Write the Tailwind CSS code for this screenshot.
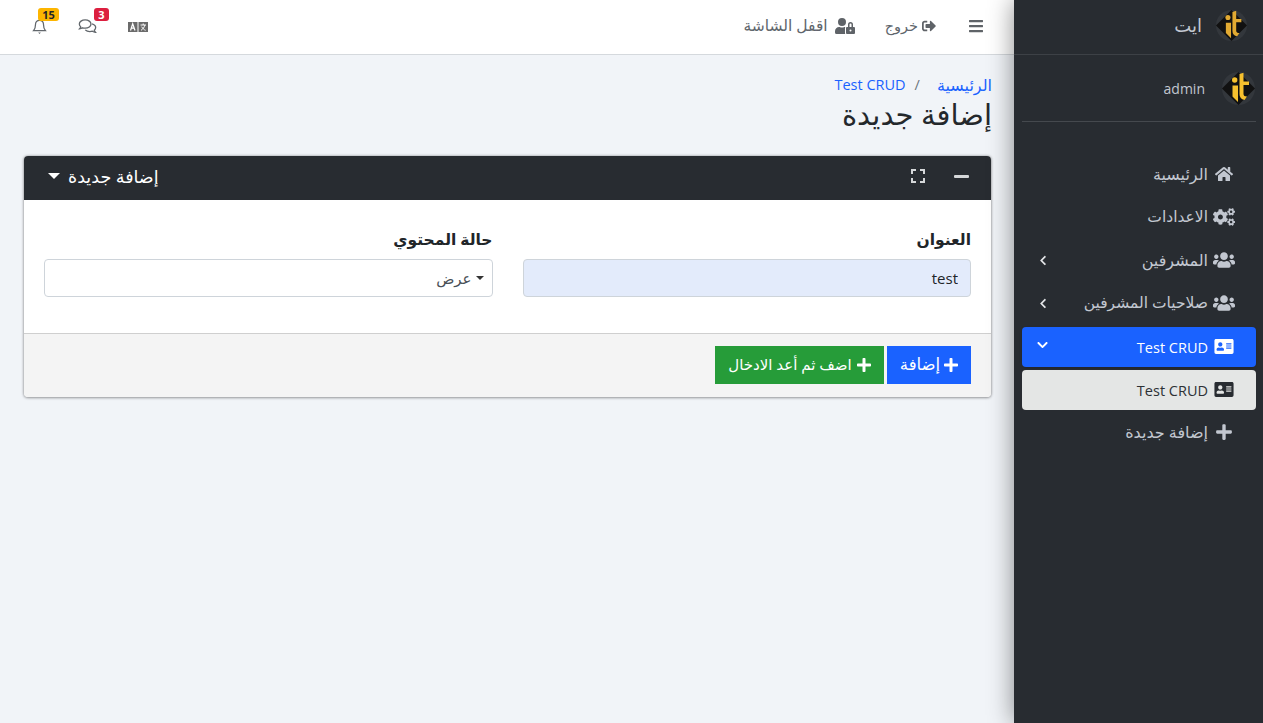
<!DOCTYPE html>
<html lang="ar" dir="rtl">
<head>
    <meta charset="UTF-8">
    <title>إضافة جديدة</title>
    <script src="https://cdn.jsdelivr.net/npm/@tailwindcss/browser@4"></script>
</head>
<body class="bg-[#f1f4f8] h-[723px] overflow-hidden font-['Open_Sans','Noto_Sans','DejaVu_Sans',sans-serif] text-[14px]">
<div class="flex h-[723px]">
    <!-- Sidebar -->
    <aside class="w-[249px] shrink-0 bg-[#282c31] relative z-10 shadow-[0_0_24px_rgba(0,0,0,0.45)] text-[#c2c7d0]">
        <div class="h-[55px] border-b border-[#3d4146] flex items-center pr-[16px] pb-[4px] gap-[14px]">
            <svg class="w-[31px] h-[31px]" viewBox="0 0 33 33"><circle cx="16.5" cy="16.5" r="16.5" fill="#33373c"/><path d="M16.5 0 33 16.5 16.5 33 0 16.5z" fill="#111"/><circle cx="12.7" cy="8" r="2.7" fill="#e2aa32"/><path d="M10.5 13.5H16V30L10.5 24.5zM17.5 2 21.500 .8V9.500H27V13H21.500V22Q21.500 24.500 25 24.500L22.500 28Q17.500 27 17.500 22z" fill="#e2aa32"/></svg>
            <span class="text-[18px] text-[#c2c7d0]">ايت</span>
        </div>
        <div class="mr-[7px] ml-[8px] h-[67px] border-b border-[#45494e] flex items-center pr-[1px] gap-[17px]">
            <svg class="w-[33px] h-[33px]" viewBox="0 0 33 33"><circle cx="16.5" cy="16.5" r="16.5" fill="#33373c"/><path d="M16.5 0 33 16.5 16.5 33 0 16.5z" fill="#111"/><circle cx="12.7" cy="8" r="2.7" fill="#f6c02e"/><path d="M10.5 13.5H16V30L10.5 24.5zM17.5 2 21.500 .8V9.500H27V13H21.500V22Q21.500 24.500 25 24.500L22.500 28Q17.500 27 17.500 22z" fill="#f6c02e"/></svg>
            <span class="text-[14px] text-[#c2c7d0]">admin</span>
        </div>
        <nav class="mt-[33px] mr-[7px] ml-[8px] flex flex-col gap-[3px]">
            <a class="h-[40px] flex items-center pr-[21px] gap-[5px] rounded">
                <svg class="w-[22px] h-[16px] -mt-[2px] fill-[#c2c7d0]" viewBox="0 0 576 512"><path d="M280.37 148.26L96 300.11V464a16 16 0 0 0 16 16l112.06-.29a16 16 0 0 0 15.92-16V368a16 16 0 0 1 16-16h64a16 16 0 0 1 16 16v95.64a16 16 0 0 0 16 16.05L464 480a16 16 0 0 0 16-16V300L295.67 148.26a12.19 12.19 0 0 0-15.3 0zM571.6 251.47L488 182.56V44.05a12 12 0 0 0-12-12h-56a12 12 0 0 0-12 12v72.61L318.47 43a48 48 0 0 0-61 0L4.34 251.47a12 12 0 0 0-1.6 16.9l25.5 31A12 12 0 0 0 45.15 301l235.22-193.74a12.19 12.19 0 0 1 15.3 0L530.9 301a12 12 0 0 0 16.9-1.6l25.5-31a12 12 0 0 0-1.7-16.93z"/></svg>
                <span class="text-[16px] -translate-y-px">الرئيسية</span>
            </a>
            <a class="h-[40px] flex items-center pr-[21px] gap-[5px] rounded">
                <svg class="w-[22px] h-[18px] -mt-[2px] fill-[#c2c7d0]" viewBox="0 0 640 512"><path d="M512.1 191l-8.2 14.3c-3 5.3-9.4 7.5-15.1 5.4-11.8-4.4-22.6-10.7-32.1-18.6-4.6-3.8-5.8-10.5-2.8-15.7l8.2-14.3c-6.9-8-12.3-17.3-15.9-27.4h-16.5c-6 0-11.2-4.3-12.2-10.3-2-12-2.1-24.6 0-37.1 1-6 6.2-10.4 12.2-10.4h16.5c3.6-10.1 9-19.4 15.9-27.4l-8.2-14.3c-3-5.2-1.9-11.9 2.8-15.7 9.5-7.9 20.4-14.2 32.1-18.6 5.7-2.1 12.1.1 15.1 5.4l8.2 14.3c10.5-1.9 21.2-1.9 31.7 0L552 6.3c3-5.3 9.4-7.5 15.1-5.4 11.8 4.4 22.6 10.7 32.1 18.6 4.6 3.8 5.8 10.5 2.8 15.7l-8.2 14.3c6.9 8 12.3 17.3 15.9 27.4h16.5c6 0 11.2 4.3 12.2 10.3 2 12 2.1 24.6 0 37.1-1 6-6.2 10.4-12.2 10.4h-16.5c-3.6 10.1-9 19.4-15.9 27.4l8.2 14.3c3 5.2 1.9 11.9-2.8 15.7-9.5 7.9-20.4 14.2-32.1 18.6-5.7 2.1-12.1-.1-15.1-5.4l-8.2-14.3c-10.4 1.9-21.2 1.9-31.7 0zm-10.5-58.8c38.5 29.6 82.4-14.3 52.8-52.8-38.5-29.7-82.4 14.3-52.8 52.8zM386.3 286.1l33.7 16.8c10.1 5.8 14.5 18.1 10.5 29.1-8.9 24.2-26.4 46.4-42.6 65.8-7.4 8.9-20.2 11.1-30.3 5.3l-29.1-16.8c-16 13.7-34.6 24.6-54.9 31.7v33.6c0 11.6-8.3 21.6-19.7 23.6-24.6 4.2-50.4 4.4-75.9 0-11.5-2-20-11.9-20-23.6V418c-20.3-7.2-38.9-18-54.9-31.7L74 403c-10 5.8-22.9 3.6-30.3-5.3-16.2-19.4-33.3-41.6-42.2-65.7-4-10.9.4-23.2 10.5-29.1l33.3-16.8c-3.9-20.9-3.9-42.4 0-63.4L12 205.8c-10.1-5.8-14.6-18.1-10.5-29 8.9-24.2 26-46.4 42.2-65.8 7.4-8.9 20.2-11.1 30.3-5.3l29.1 16.8c16-13.7 34.6-24.6 54.9-31.7V57.1c0-11.5 8.2-21.5 19.6-23.5 24.6-4.2 50.5-4.4 76-.1 11.5 2 20 11.9 20 23.6v33.6c20.3 7.2 38.9 18 54.9 31.7l29.1-16.8c10-5.8 22.9-3.6 30.3 5.3 16.2 19.4 33.2 41.6 42.1 65.8 4 10.9.1 23.2-10 29.1l-33.7 16.8c3.9 21 3.9 42.5 0 63.5zm-117.6 21.1c59.2-77-28.7-164.9-105.7-105.7-59.2 77 28.7 164.9 105.7 105.7zm243.4 182.7l-8.2 14.3c-3 5.3-9.4 7.5-15.1 5.4-11.8-4.4-22.6-10.7-32.1-18.6-4.6-3.8-5.8-10.5-2.8-15.7l8.2-14.3c-6.9-8-12.3-17.3-15.9-27.4h-16.5c-6 0-11.2-4.3-12.2-10.3-2-12-2.1-24.6 0-37.1 1-6 6.2-10.4 12.2-10.4h16.5c3.6-10.1 9-19.4 15.9-27.4l-8.2-14.3c-3-5.2-1.9-11.9 2.8-15.7 9.5-7.9 20.4-14.2 32.1-18.6 5.7-2.1 12.1.1 15.1 5.4l8.2 14.3c10.5-1.9 21.2-1.9 31.7 0l8.2-14.3c3-5.3 9.4-7.5 15.1-5.4 11.8 4.4 22.6 10.7 32.1 18.6 4.6 3.8 5.8 10.5 2.8 15.7l-8.2 14.3c6.9 8 12.3 17.3 15.9 27.4h16.5c6 0 11.2 4.3 12.2 10.3 2 12 2.1 24.6 0 37.1-1 6-6.2 10.4-12.2 10.4h-16.5c-3.6 10.1-9 19.4-15.9 27.4l8.2 14.3c3 5.2 1.9 11.9-2.8 15.7-9.5 7.9-20.4 14.2-32.1 18.6-5.7 2.1-12.1-.1-15.1-5.4l-8.2-14.3c-10.4 1.9-21.2 1.9-31.7 0zM501.6 431c38.5 29.6 82.4-14.3 52.8-52.8-38.5-29.6-82.4 14.3-52.8 52.8z"/></svg>
                <span class="text-[15.5px] -translate-y-px">الاعدادات</span>
            </a>
            <a class="h-[40px] flex items-center pr-[21px] pl-[17px] gap-[5px] rounded">
                <svg class="w-[22px] h-[18px] -mt-[2px] fill-[#c2c7d0]" viewBox="0 0 640 512"><path d="M96 224c35.3 0 64-28.7 64-64s-28.7-64-64-64-64 28.7-64 64 28.7 64 64 64zm448 0c35.3 0 64-28.7 64-64s-28.7-64-64-64-64 28.7-64 64 28.7 64 64 64zm32 32h-64c-17.6 0-33.5 7.1-45.1 18.6 40.3 22.1 68.9 62 75.1 109.4h66c17.7 0 32-14.3 32-32v-32c0-35.3-28.7-64-64-64zm-256 0c61.9 0 112-50.1 112-112S381.9 32 320 32 208 82.1 208 144s50.1 112 112 112zm76.8 32h-8.3c-20.8 10-43.9 16-68.5 16s-47.6-6-68.5-16h-8.3C179.6 288 128 339.6 128 403.2V432c0 26.5 21.5 48 48 48h288c26.5 0 48-21.5 48-48v-28.8c0-63.6-51.6-115.2-115.2-115.2zm-223.7-13.4C161.5 263.1 145.6 256 128 256H64c-35.3 0-64 28.7-64 64v32c0 17.7 14.3 32 32 32h65.9c6.3-47.4 34.9-87.3 75.2-109.4z"/></svg>
                <span class="text-[16px] -translate-y-px">المشرفين</span>
                <svg class="w-[8px] h-[11px] mr-auto -mt-[2px] fill-[#e4e6e8]" viewBox="0 0 320 512"><path d="M34.52 239.03L228.87 44.69c9.37-9.37 24.57-9.37 33.94 0l22.67 22.67c9.36 9.36 9.37 24.52.04 33.9L131.49 256l154.02 154.75c9.34 9.38 9.32 24.54-.04 33.9l-22.67 22.67c-9.37 9.37-24.57 9.37-33.94 0L34.52 272.97c-9.37-9.37-9.37-24.57 0-33.94z"/></svg>
            </a>
            <a class="h-[40px] flex items-center pr-[21px] pl-[17px] gap-[5px] rounded">
                <svg class="w-[22px] h-[18px] -mt-[2px] fill-[#c2c7d0]" viewBox="0 0 640 512"><path d="M96 224c35.3 0 64-28.7 64-64s-28.7-64-64-64-64 28.7-64 64 28.7 64 64 64zm448 0c35.3 0 64-28.7 64-64s-28.7-64-64-64-64 28.7-64 64 28.7 64 64 64zm32 32h-64c-17.6 0-33.5 7.1-45.1 18.6 40.3 22.1 68.9 62 75.1 109.4h66c17.7 0 32-14.3 32-32v-32c0-35.3-28.7-64-64-64zm-256 0c61.9 0 112-50.1 112-112S381.9 32 320 32 208 82.1 208 144s50.1 112 112 112zm76.8 32h-8.3c-20.8 10-43.9 16-68.5 16s-47.6-6-68.5-16h-8.3C179.6 288 128 339.6 128 403.2V432c0 26.5 21.5 48 48 48h288c26.5 0 48-21.5 48-48v-28.8c0-63.6-51.6-115.2-115.2-115.2zm-223.7-13.4C161.5 263.1 145.6 256 128 256H64c-35.3 0-64 28.7-64 64v32c0 17.7 14.3 32 32 32h65.9c6.3-47.4 34.9-87.3 75.2-109.4z"/></svg>
                <span class="text-[15.5px] -translate-y-px">صلاحيات المشرفين</span>
                <svg class="w-[8px] h-[11px] mr-auto -mt-[2px] fill-[#e4e6e8]" viewBox="0 0 320 512"><path d="M34.52 239.03L228.87 44.69c9.37-9.37 24.57-9.37 33.94 0l22.67 22.67c9.36 9.36 9.37 24.52.04 33.9L131.49 256l154.02 154.75c9.34 9.38 9.32 24.54-.04 33.9l-22.67 22.67c-9.37 9.37-24.57 9.37-33.94 0L34.52 272.97c-9.37-9.37-9.37-24.57 0-33.94z"/></svg>
            </a>
            <a class="h-[40px] flex items-center pr-[21px] pl-[15px] gap-[5px] rounded bg-[#1a62ff] text-white shadow">
                <svg class="w-[22px] h-[17px] -mt-[2px] fill-white" viewBox="0 0 576 512"><path d="M528 32H48C21.5 32 0 53.5 0 80v352c0 26.5 21.5 48 48 48h480c26.5 0 48-21.5 48-48V80c0-26.5-21.5-48-48-48zm-352 96c35.3 0 64 28.7 64 64s-28.7 64-64 64-64-28.7-64-64 28.7-64 64-64zm112 236.8c0 10.6-10 19.2-22.4 19.2H86.4C74 384 64 375.4 64 364.8v-19.2c0-31.8 30.1-57.6 67.2-57.6h5c12.3 5.1 25.7 8 39.8 8s27.6-2.9 39.8-8h5c37.1 0 67.2 25.8 67.2 57.6v19.2zM512 312c0 4.4-3.6 8-8 8H360c-4.4 0-8-3.6-8-8v-16c0-4.4 3.6-8 8-8h144c4.4 0 8 3.6 8 8v16zm0-64c0 4.4-3.6 8-8 8H360c-4.4 0-8-3.6-8-8v-16c0-4.4 3.6-8 8-8h144c4.4 0 8 3.6 8 8v16zm0-64c0 4.4-3.6 8-8 8H360c-4.4 0-8-3.6-8-8v-16c0-4.4 3.6-8 8-8h144c4.4 0 8 3.6 8 8v16z"/></svg>
                <span class="text-[14.5px] translate-y-px">Test CRUD</span>
                <svg class="w-[11px] h-[12px] mr-auto -mt-[4px] fill-white" viewBox="0 0 448 512"><path d="M207.029 381.476L12.686 187.132c-9.373-9.373-9.373-24.569 0-33.941l22.667-22.667c9.357-9.357 24.522-9.375 33.901-.04L224 284.505l154.745-154.021c9.379-9.335 24.544-9.317 33.901.04l22.667 22.667c9.373 9.373 9.373 24.569 0 33.941L240.971 381.476c-9.373 9.372-24.569 9.372-33.942 0z"/></svg>
            </a>
            <a class="h-[40px] flex items-center pr-[21px] gap-[5px] rounded bg-[#e4e6e5] text-[#2d3135]">
                <svg class="w-[22px] h-[17px] -mt-[2px] fill-[#282c31]" viewBox="0 0 576 512"><path d="M528 32H48C21.5 32 0 53.5 0 80v352c0 26.5 21.5 48 48 48h480c26.5 0 48-21.5 48-48V80c0-26.5-21.5-48-48-48zm-352 96c35.3 0 64 28.7 64 64s-28.7 64-64 64-64-28.7-64-64 28.7-64 64-64zm112 236.8c0 10.6-10 19.2-22.4 19.2H86.4C74 384 64 375.4 64 364.8v-19.2c0-31.8 30.1-57.6 67.2-57.6h5c12.3 5.1 25.7 8 39.8 8s27.6-2.9 39.8-8h5c37.1 0 67.2 25.8 67.2 57.6v19.2zM512 312c0 4.4-3.6 8-8 8H360c-4.4 0-8-3.6-8-8v-16c0-4.4 3.6-8 8-8h144c4.4 0 8 3.6 8 8v16zm0-64c0 4.4-3.6 8-8 8H360c-4.4 0-8-3.6-8-8v-16c0-4.4 3.6-8 8-8h144c4.4 0 8 3.6 8 8v16zm0-64c0 4.4-3.6 8-8 8H360c-4.4 0-8-3.6-8-8v-16c0-4.4 3.6-8 8-8h144c4.4 0 8 3.6 8 8v16z"/></svg>
                <span class="text-[14.5px] translate-y-px">Test CRUD</span>
            </a>
            <a class="h-[40px] flex items-center pr-[24px] gap-[8px] rounded">
                <svg class="w-[16px] h-[18px] -mt-[2px] fill-[#c2c7d0]" viewBox="0 0 448 512"><path d="M416 208H272V64c0-17.67-14.33-32-32-32h-32c-17.67 0-32 14.33-32 32v144H32c-17.67 0-32 14.33-32 32v32c0 17.67 14.33 32 32 32h144v144c0 17.67 14.33 32 32 32h32c17.67 0 32-14.33 32-32V304h144c17.67 0 32-14.33 32-32v-32c0-17.67-14.33-32-32-32z"/></svg>
                <span class="text-[16px] -translate-y-px">إضافة جديدة</span>
            </a>
        </nav>
    </aside>

    <main class="flex-1 min-w-0">
        <!-- Navbar -->
        <header class="h-[55px] bg-white border-b border-[#d5d9dd] flex items-center text-[#60666c] text-[15px]">
            <svg class="w-[14px] h-[16px] mr-[31px] -mt-[2px] fill-[#5f6368]" viewBox="0 0 448 512"><path d="M16 132h416c8.837 0 16-7.163 16-16V76c0-8.837-7.163-16-16-16H16C7.163 60 0 67.163 0 76v40c0 8.837 7.163 16 16 16zm0 160h416c8.837 0 16-7.163 16-16v-40c0-8.837-7.163-16-16-16H16c-8.837 0-16 7.163-16 16v40c0 8.837 7.163 16 16 16zm0 160h416c8.837 0 16-7.163 16-16v-40c0-8.837-7.163-16-16-16H16c-8.837 0-16 7.163-16 16v40c0 8.837 7.163 16 16 16z"/></svg>
            <a class="flex items-center gap-[3px] mr-[32px]">
                <svg class="w-[16px] h-[14px] -mt-[2px] fill-[#5f6368]" viewBox="0 0 512 512"><path d="M497 273L329 441c-15 15-41 4.5-41-17v-96H152c-13.3 0-24-10.7-24-24v-96c0-13.3 10.7-24 24-24h136V88c0-21.4 25.9-32 41-17l168 168c9.3 9.4 9.3 24.6 0 34zM192 436v-40c0-6.6-5.4-12-12-12H96c-17.7 0-32-14.3-32-32V160c0-17.7 14.3-32 32-32h84c6.6 0 12-5.4 12-12V76c0-6.6-5.4-12-12-12H96c-53 0-96 43-96 96v192c0 53 43 96 96 96h84c6.6 0 12-5.4 12-12z"/></svg>
                <span class="text-[14.5px] -translate-y-px">خروج</span>
            </a>
            <a class="flex items-center gap-[7px] mr-[30px]">
                <svg class="w-[20px] h-[16px] -mt-[2px] fill-[#5f6368]" viewBox="0 0 640 512"><path d="M224 256A128 128 0 1 0 96 128a128 128 0 0 0 128 128zm96 64a63.08 63.08 0 0 1 8.1-30.5c-4.8-.5-9.5-1.5-14.5-1.5h-16.7a174.08 174.08 0 0 1-145.8 0h-16.7A134.43 134.43 0 0 0 0 422.4V464a48 48 0 0 0 48 48h280.9a63.54 63.54 0 0 1-8.9-32zm288-32h-32v-80a80 80 0 0 0-160 0v80h-32a32 32 0 0 0-32 32v160a32 32 0 0 0 32 32h224a32 32 0 0 0 32-32V320a32 32 0 0 0-32-32zM496 432a32 32 0 1 1 32-32 32 32 0 0 1-32 32zm32-144h-64v-80a32 32 0 0 1 64 0z"/></svg>
                <span class="text-[15.5px] -translate-y-px">اقفل الشاشة</span>
            </a>
            <div class="mr-auto flex items-center pl-[32px] gap-[31px] -mt-[1px]">
                <svg class="w-[20px] h-[10px]" viewBox="0 0 20 10"><rect width="9.5" height="10" fill="#6b6b6b"/><rect x="10.5" width="9.5" height="10" fill="#6b6b6b"/><path d="M2.5 8.5 4.7 1.8 7 8.5M3.4 6.1H6" fill="none" stroke="#fff" stroke-width="1.2"/><path d="M12.5 3H18M15.2 1.5V3M13 8.3C15 7.1 16.3 5.500 16.800 3.100M13.700 4.700C14.600 6.500 15.900 7.700 17.600 8.300" fill="none" stroke="#fff" stroke-width="1"/></svg>
                <div class="relative w-[19px] h-[15px]">
                    <svg class="w-[19px] h-[15px]" viewBox="0 0 19 16" fill="none" stroke="#62676c" stroke-width="1.4"><path d="M7 1C3.500 1 .8 3 .8 5.400c0 1.200.6 2.200 1.500 3-.2.8-.7 1.500-1.200 2 1.200 0 2.300-.4 3.200-1 .8.300 1.700.4 2.700.4 3.500 0 6.200-2 6.200-4.400S10.500 1 7 1z"/><path d="M14.300 5.200c2.200.6 3.900 2.100 3.900 3.900 0 1.100-.6 2.100-1.500 2.900.2.900.7 1.600 1.200 2.100-1.200 0-2.300-.5-3.200-1.100-.8.300-1.700.4-2.700.4-2 0-3.800-.7-4.900-1.800"/></svg>
                    <span class="absolute -top-[11px] -right-[12px] h-[13px] min-w-[15px] px-[3px] rounded-[3px] bg-[#dc1f3f] text-white text-[11px] font-bold leading-[13px] text-center">3</span>
                </div>
                <div class="relative w-[15px] h-[16px]">
                    <svg class="w-[15px] h-[16px]" viewBox="0 0 15 18" fill="none" stroke="#62676c" stroke-width="1.4"><path d="M7.500 1.500C4.800 1.500 3 3.500 3 6.200c0 4-.8 5.400-2.200 7h13.400c-1.400-1.600-2.200-3-2.200-7 0-2.700-1.800-4.700-4.500-4.700z"/><path d="M6 15.300h3l-1.500 1.500z" fill="#62676c" stroke="none"/></svg>
                    <span class="absolute -top-[11px] -right-[12px] h-[13px] min-w-[21px] px-[3px] rounded-[3px] bg-[#fdb500] text-[#1f2327] text-[11px] font-bold leading-[13px] text-center">15</span>
                </div>
            </div>
        </header>

        <!-- Page head -->
        <div class="pr-[22px] pl-[23px]">
            <div class="pt-[20px] flex items-center h-[40px] text-[#1a62ff] text-[14.5px]">
                <a class="text-[16px]">الرئيسية</a>
                <span class="text-[#6c757d] mr-[17px] ml-[9px]">/</span>
                <a>Test CRUD</a>
            </div>
            <h1 class="text-[29px] leading-[36px] text-[#24282c] mt-[1px]">إضافة جديدة</h1>

            <!-- Card -->
            <section class="mt-[24px] mx-px rounded-[4px] bg-white shadow-[0_0_3px_rgba(0,0,0,0.35),0_1px_3px_rgba(0,0,0,0.25)] overflow-hidden">
                <div class="h-[44px] pb-[4px] bg-[#282c31] text-white flex items-center pr-[22px] pl-[24px]">
                    <svg class="w-[15px] h-[3px] fill-[#d5d7d9]" viewBox="0 0 15 3"><rect width="15" height="3" rx="1"/></svg>
                    <svg class="w-[14px] h-[14px] mr-[29px]" viewBox="0 0 14 14" fill="none" stroke="#d5d7d9" stroke-width="2"><path d="M1 5V1H5M9 1H13V5M13 9V13H9M5 13H1V9"/></svg>
                    <span class="mr-auto flex items-center gap-[8px] text-[17.5px]">
                        <span>إضافة جديدة</span>
                        <svg class="w-[12px] h-[6px] fill-white" viewBox="0 0 12 6"><path d="M0 0H12L6 6z"/></svg>
                    </span>
                </div>
                <div class="h-[133px] px-[20px] pt-[27px] grid grid-cols-2 gap-[30px] text-[#212529]">
                    <div>
                        <label class="block font-bold text-[15.5px] leading-[24px] mb-[8px]">العنوان</label>
                        <input value="test" dir="rtl" class="w-full h-[38px] rounded-[4px] border border-[#ced4da] bg-[#e3ebfb] px-[12px] text-[15px] text-[#212529]">
                    </div>
                    <div>
                        <label class="block font-bold text-[15.5px] leading-[24px] mb-[8px]">حالة المحتوي</label>
                        <div class="h-[38px] rounded-[4px] border border-[#ced4da] bg-white flex items-center pr-[8px] gap-[4px] text-[15px] text-[#495057]">
                            <svg class="w-[8px] h-[4px] fill-[#333]" viewBox="0 0 8 4"><path d="M0 0H8L4 4z"/></svg>
                            <span>عرض</span>
                        </div>
                    </div>
                </div>
                <div class="h-[64px] pb-[2px] bg-[#f4f4f4] border-t border-[#cfcfcf] flex items-center pr-[20px] gap-[3px] text-white text-[15px]">
                    <button class="h-[38px] w-[84px] bg-[#1a62ff] flex items-center justify-center gap-[4px] text-[16.5px]">
                        <svg class="w-[14px] h-[16px] fill-white" viewBox="0 0 448 512"><path d="M416 208H272V64c0-17.67-14.33-32-32-32h-32c-17.67 0-32 14.33-32 32v144H32c-17.67 0-32 14.33-32 32v32c0 17.67 14.33 32 32 32h144v144c0 17.67 14.33 32 32 32h32c17.67 0 32-14.33 32-32V304h144c17.67 0 32-14.33 32-32v-32c0-17.67-14.33-32-32-32z"/></svg>
                        <span>إضافة</span>
                    </button>
                    <button class="h-[38px] w-[169px] bg-[#269c39] flex items-center justify-center gap-[5px]">
                        <svg class="w-[14px] h-[16px] fill-white" viewBox="0 0 448 512"><path d="M416 208H272V64c0-17.67-14.33-32-32-32h-32c-17.67 0-32 14.33-32 32v144H32c-17.67 0-32 14.33-32 32v32c0 17.67 14.33 32 32 32h144v144c0 17.67 14.33 32 32 32h32c17.67 0 32-14.33 32-32V304h144c17.67 0 32-14.33 32-32v-32c0-17.67-14.33-32-32-32z"/></svg>
                        <span>اضف ثم أعد الادخال</span>
                    </button>
                </div>
            </section>
        </div>
    </main>
</div>
</body>
</html>
